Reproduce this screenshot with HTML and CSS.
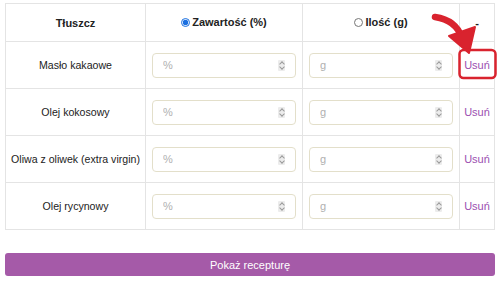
FILE: index.html
```html
<!DOCTYPE html>
<html>
<head>
  <title>Kalkulator mydła</title>
  <meta charset="UTF-8">
  <link rel="stylesheet" href="styles.css">
</head>
<body>
<div class="page">
  <table class="fats">
    <thead>
      <tr>
        <th class="col-name">Tłuszcz</th>
        <th class="col-val"><label><input type="radio" name="mode" checked> Zawartość (%)</label></th>
        <th class="col-val"><label><input type="radio" name="mode"> Ilość (g)</label></th>
        <th class="col-del">-</th>
      </tr>
    </thead>
    <tbody>
      <tr>
        <td class="name">Masło kakaowe</td>
        <td><div class="field"><input type="text" placeholder="%"><span class="spin"></span></div></td>
        <td><div class="field"><input type="text" placeholder="g"><span class="spin"></span></div></td>
        <td><a href="#" class="remove">Usuń</a></td>
      </tr>
      <tr>
        <td class="name">Olej kokosowy</td>
        <td><div class="field"><input type="text" placeholder="%"><span class="spin"></span></div></td>
        <td><div class="field"><input type="text" placeholder="g"><span class="spin"></span></div></td>
        <td><a href="#" class="remove">Usuń</a></td>
      </tr>
      <tr>
        <td class="name">Oliwa z oliwek (extra virgin)</td>
        <td><div class="field"><input type="text" placeholder="%"><span class="spin"></span></div></td>
        <td><div class="field"><input type="text" placeholder="g"><span class="spin"></span></div></td>
        <td><a href="#" class="remove">Usuń</a></td>
      </tr>
      <tr>
        <td class="name">Olej rycynowy</td>
        <td><div class="field"><input type="text" placeholder="%"><span class="spin"></span></div></td>
        <td><div class="field"><input type="text" placeholder="g"><span class="spin"></span></div></td>
        <td><a href="#" class="remove">Usuń</a></td>
      </tr>
    </tbody>
  </table>

  <button type="button" class="btn">Pokaż recepturę</button>

  <svg class="mark" width="500" height="281" viewBox="0 0 500 281">
    <path d="M435 17 Q456 20 462 38" fill="none" stroke="#d9232e" stroke-width="6.5" stroke-linecap="round"/>
    <polygon points="449,36 475,27 469,53" fill="#d9232e" stroke="#d9232e" stroke-width="2" stroke-linejoin="round"/>
    <rect x="459.5" y="50" width="36" height="28" rx="4" fill="none" stroke="#d9232e" stroke-width="2.5"/>
  </svg>
</div>
</body>
</html>
```

FILE: styles.css
```css
body {
  margin: 0;
  background-color: #fff;
  font-family: "Liberation Sans", Arial, sans-serif;
  color: #222;
}

.page {
  position: relative;
  padding: 3px 5px 0 5px;
}

.fats {
  width: 490px;
  border-collapse: collapse;
  table-layout: fixed;
  font-size: 11px;
}

.fats th,
.fats td {
  box-sizing: border-box;
  border: 1px solid #e4e4e4;
  text-align: center;
  padding: 0 6px;
}

.fats th {
  height: 38px;
  font-weight: bold;
}

.fats td {
  height: 47px;
}

.fats td.name {
  padding: 0;
  white-space: nowrap;
  font-size: 10.6px;
}

.col-name { width: 140px; }
.col-val { width: 157px; }

.fats th label {
  display: inline-flex;
  align-items: center;
  gap: 2px;
}

.fats th input[type="radio"] {
  margin: 0;
  width: 9px;
  height: 9px;
  accent-color: #1a6fe0;
}

.field {
  position: relative;
  height: 25px;
}

.field input {
  width: 100%;
  height: 25px;
  box-sizing: border-box;
  border: 1px solid #e3dfca;
  border-radius: 4px;
  padding: 0 10px;
  font-family: "Liberation Sans", Arial, sans-serif;
  font-size: 11px;
  color: #333;
  background: #fff;
}

.field input::placeholder {
  color: #b0b0b0;
}

.spin {
  position: absolute;
  right: 11px;
  top: 7px;
  width: 7px;
  height: 11px;
  background: #ececec;
  border-radius: 1px;
}

.spin::before,
.spin::after {
  content: "";
  position: absolute;
  left: 1.5px;
  width: 3px;
  height: 3px;
  border-left: 1px solid #999;
  border-top: 1px solid #999;
}

.spin::before {
  top: 2px;
  transform: rotate(45deg);
}

.spin::after {
  bottom: 2px;
  transform: rotate(225deg);
}

.fats td:last-child,
.fats th:last-child {
  padding: 0;
}

.remove {
  color: #9b4fb0;
  text-decoration: none;
  font-size: 11px;
}

.btn {
  display: block;
  width: 490px;
  height: 23px;
  margin-top: 23px;
  border: none;
  border-radius: 3px;
  background-color: #a55aa8;
  color: #fff;
  font-family: "Liberation Sans", Arial, sans-serif;
  font-size: 11px;
  cursor: pointer;
}

.mark {
  position: absolute;
  top: 0;
  left: 0;
  pointer-events: none;
}
```
